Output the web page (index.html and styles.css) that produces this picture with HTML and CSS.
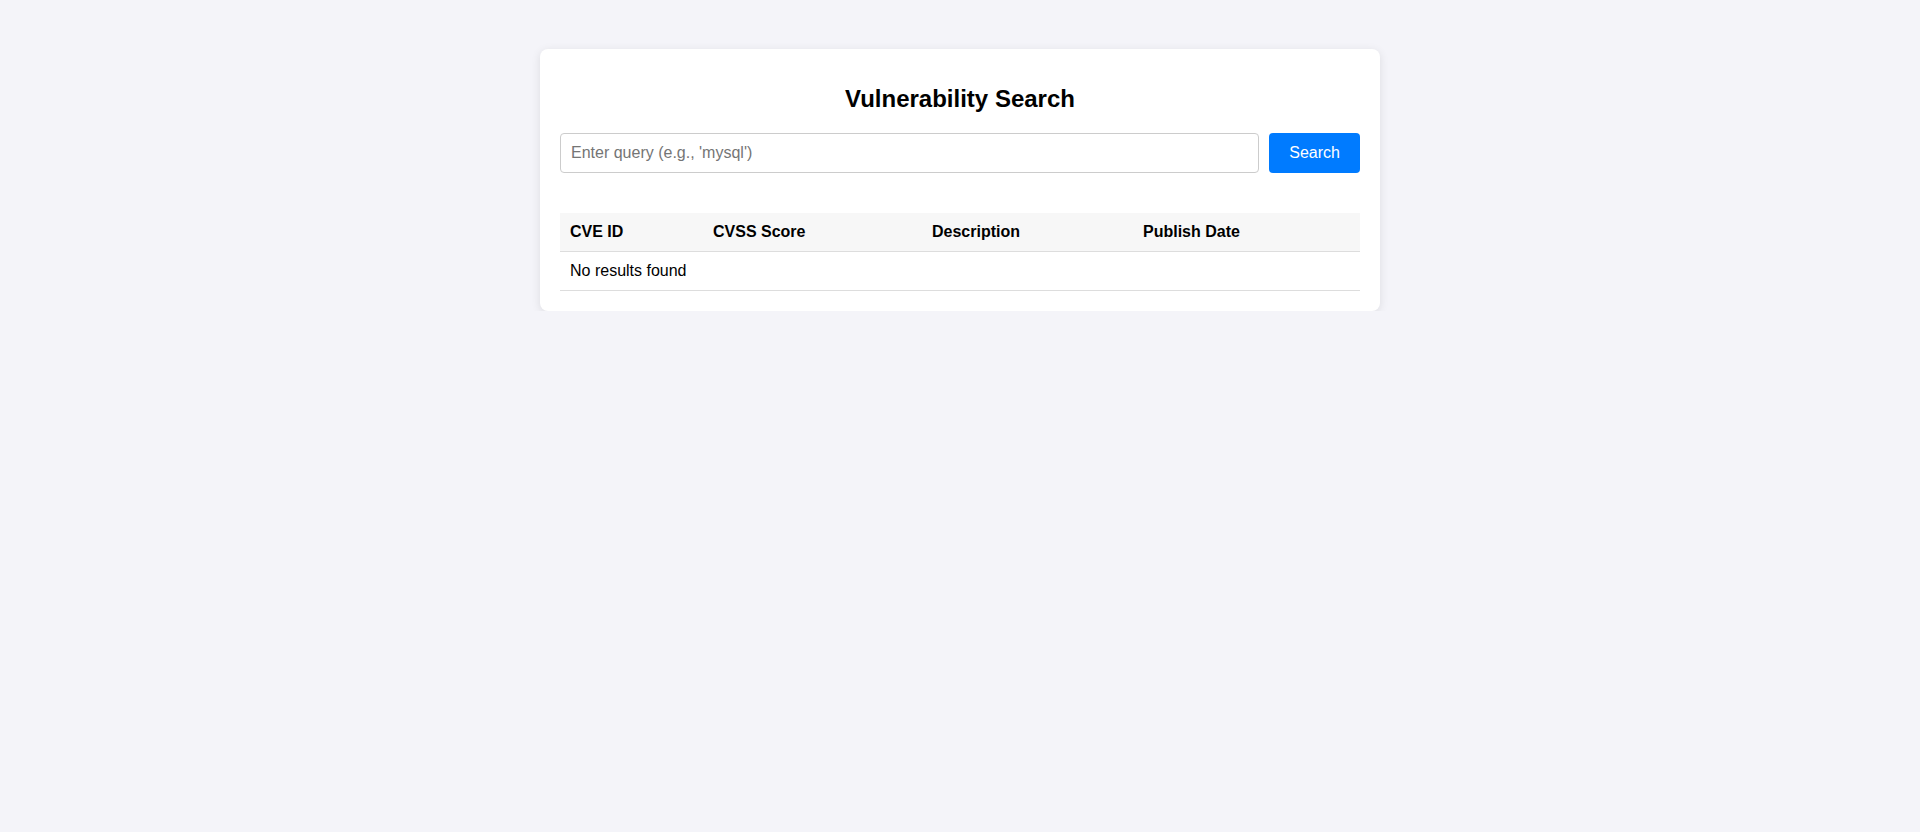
FILE: index.html
```html
<!DOCTYPE html>
<html lang="en">
<head>
<meta charset="UTF-8">
<title>Vulnerability Search</title>
<link rel="stylesheet" href="styles.css">
</head>
<body>
<div class="container">
  <h1 class="title">Vulnerability Search</h1>
  <form class="search-form">
    <input class="search-input" type="text" placeholder="Enter query (e.g., 'mysql')">
    <button class="search-button" type="button">Search</button>
  </form>
  <table class="results">
    <colgroup>
      <col class="col-id">
      <col class="col-score">
      <col class="col-desc">
      <col class="col-date">
    </colgroup>
    <thead>
      <tr>
        <th>CVE ID</th>
        <th>CVSS Score</th>
        <th>Description</th>
        <th>Publish Date</th>
      </tr>
    </thead>
    <tbody>
      <tr>
        <td colspan="4">No results found</td>
      </tr>
    </tbody>
  </table>
</div>
</body>
</html>
```

FILE: styles.css
```css
html, body {
  margin: 0;
  padding: 0;
}

body {
  background: #f4f4f9;
  font-family: "Liberation Sans", Arial, sans-serif;
  color: #000;
  padding-top: 49px;
}

.container {
  width: 800px;
  margin: 0 auto;
  padding: 20px;
  background: #fff;
  border-radius: 8px;
  box-shadow: 0 2px 10px rgba(0, 0, 0, 0.1);
}

.title {
  font-size: 24px;
  font-weight: bold;
  text-align: center;
  margin: 16px 0 20px;
}

.search-form {
  display: flex;
  gap: 10px;
  margin: 0 0 40px;
}

.search-input {
  flex: 1;
  height: 40px;
  box-sizing: border-box;
  padding: 10px;
  font-family: "Liberation Sans", Arial, sans-serif;
  font-size: 16px;
  border: 1px solid #ccc;
  border-radius: 4px;
  outline: none;
}

.search-input::placeholder {
  color: #757575;
}

.search-button {
  height: 40px;
  box-sizing: border-box;
  padding: 10px 20px;
  font-family: "Liberation Sans", Arial, sans-serif;
  font-size: 16px;
  color: #fff;
  background: #007bff;
  border: none;
  border-radius: 4px;
}

.results {
  width: 100%;
  border-collapse: collapse;
  table-layout: fixed;
}

.col-id { width: 143px; }
.col-score { width: 219px; }
.col-desc { width: 211px; }
.col-date { width: 227px; }

.results th,
.results td {
  padding: 10px;
  text-align: left;
  font-size: 16px;
  border-bottom: 1px solid #ddd;
}

.results th {
  background: #f7f7f7;
  font-weight: bold;
}
```
